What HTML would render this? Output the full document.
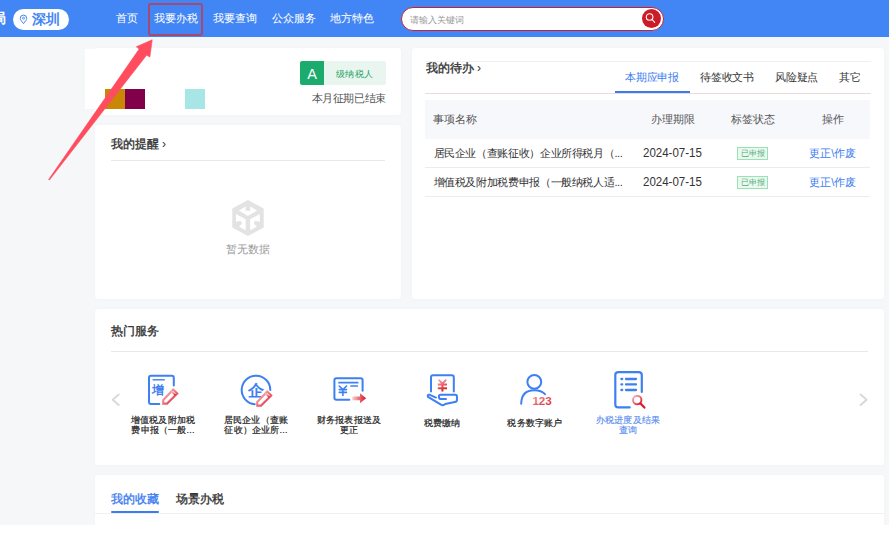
<!DOCTYPE html>
<html><head><meta charset="utf-8">
<style>
html,body{margin:0;padding:0;background:#fff;}
body{width:889px;height:536px;overflow:hidden;position:relative;font-family:"Liberation Sans",sans-serif;color:#333;}
.abs{position:absolute;}
#page{position:absolute;left:0;top:0;width:889px;height:525px;background:#f5f7f9;overflow:hidden;}
#hdr{position:absolute;left:0;top:0;width:889px;height:37px;background:#4285f4;}
.nav{position:absolute;top:10px;font-size:11px;line-height:16px;color:#fff;white-space:nowrap;-webkit-text-stroke:0.05px #fff;}
.card{position:absolute;background:#fff;border-radius:3px;box-shadow:0 0 3px rgba(0,0,0,0.03);}
.t{position:absolute;white-space:nowrap;}
.ttl{font-size:11.7px;line-height:14px;color:#333;-webkit-text-stroke:0.35px #333;}
.badge{width:29px;height:11px;border:1px solid #98e2b6;background:#eaf8f0;color:#4fae7c;font-size:8px;line-height:11px;text-align:center;}
.lbl{position:absolute;top:415px;width:100px;text-align:center;font-size:9px;letter-spacing:0.2px;line-height:10.4px;color:#222;-webkit-text-stroke:0.2px #222;white-space:nowrap;}
</style></head><body>
<div id="page">
  <div id="hdr">
    <div class="t" style="left:-8px;top:10px;font-size:14px;line-height:16px;color:#fff;font-weight:bold;">局</div>
    <div class="abs" style="left:13px;top:9px;width:56px;height:21px;border-radius:11px;background:#fff;"></div>
    <div class="t" style="left:32px;top:11px;font-size:14px;line-height:16px;color:#4285f4;font-weight:bold;">深圳</div>
    <div class="nav" style="left:115.7px;">首页</div>
    <div class="nav" style="left:153.6px;">我要办税</div>
    <div class="nav" style="left:213px;">我要查询</div>
    <div class="nav" style="left:271.6px;">公众服务</div>
    <div class="nav" style="left:330.3px;">地方特色</div>
    <div class="abs" style="left:148px;top:3px;width:51px;height:29px;border:2px solid #a64a72;border-radius:3px;"></div>
    <div class="abs" style="left:401px;top:7px;width:261px;height:22px;border:1px solid #c8202e;border-radius:12px;background:#fff;"></div>
    <div class="t" style="left:410px;top:13.5px;font-size:9.3px;line-height:12px;color:#999;">请输入关键词</div>
    <div class="abs" style="left:642px;top:9px;width:19px;height:19px;border-radius:50%;background:#cc1c27;"></div>
    <svg class="abs" style="left:19px;top:14px;" width="10" height="11" viewBox="0 0 10 11"><path d="M4.5 9.6L2 6.3Q1.3 5.3 1.3 4.3A3.2 3.2 0 0 1 7.7 4.3Q7.7 5.3 7 6.3Z" fill="none" stroke="#4285f4" stroke-width="1" stroke-linejoin="round"/><circle cx="4.5" cy="4.2" r="1" fill="none" stroke="#4285f4" stroke-width="0.9"/></svg>
    <svg class="abs" style="left:642px;top:9px;" width="19" height="19" viewBox="0 0 19 19"><circle cx="7.6" cy="8" r="3.3" fill="none" stroke="#fff" stroke-width="1.1"/><path d="M10 10.5L12.7 13.4" stroke="#fff" stroke-width="1.1" stroke-linecap="round"/></svg>
  </div>

  <!-- card 1 -->
  <div class="card" style="left:95px;top:48px;width:306px;height:67px;"></div>
  <div class="abs" style="left:85px;top:49px;width:12px;height:60px;background:#fff;"></div>
  <div class="abs" style="left:105px;top:89px;width:20px;height:20px;background:#c98705;"></div>
  <div class="abs" style="left:125px;top:89px;width:20px;height:20px;background:#82004a;"></div>
  <div class="abs" style="left:185px;top:89px;width:20px;height:20px;background:#a8e6e6;"></div>
  <div class="abs" style="left:300px;top:61px;width:24px;height:24px;background:#1aab6d;border-radius:2px 0 0 2px;"></div>
  <div class="t" style="left:304px;top:63.5px;width:16px;text-align:center;font-size:14.5px;line-height:20px;color:#fff;">A</div>
  <div class="abs" style="left:324px;top:61px;width:62px;height:24px;background:#e9f6ef;border-radius:0 2px 2px 0;"></div>
  <div class="t" style="left:336px;top:67.8px;font-size:9px;letter-spacing:0.3px;line-height:12px;color:#23a160;">级纳税人</div>
  <div class="t" style="left:311.5px;top:90.5px;font-size:11px;letter-spacing:-0.4px;line-height:14px;color:#555;">本月征期已结束</div>

  <!-- card 2 -->
  <div class="card" style="left:95px;top:125px;width:306px;height:174px;"></div>
  <div class="t ttl" style="left:111px;top:136.5px;">我的提醒</div><div class="t" style="left:162px;top:137px;font-size:12px;line-height:14px;color:#333;">›</div>
  <div class="abs" style="left:111px;top:160px;width:274px;height:1px;background:#e8e8e8;"></div>
  <svg class="abs" style="left:225px;top:193px;" width="47" height="50" viewBox="0 0 47 50">
    <path d="M22.9 7L38.7 15.4V34.5L22.9 43.1L7.3 34.5V15.4Z" fill="#e3e3e3"/>
    <path d="M13.8 17.5L20.6 13.6V17.8H25.2V13.6L32.2 17.5L22.9 22.9Z" fill="#fff"/>
    <path d="M11 21L20.7 26.3V37.3L14 33.7L17 30.5L15.6 27.7L11 28.8Z" fill="#fff"/>
    <path d="M34.8 21L25.1 26.3V37.3L31.8 33.7L28.8 30.5L30.2 27.7L34.8 28.8Z" fill="#fff"/>
  </svg>
  <div class="t" style="left:226px;top:242px;font-size:11px;line-height:14px;color:#999;">暂无数据</div>

  <!-- right card -->
  <div class="card" style="left:412px;top:48px;width:472px;height:251px;"></div>
  <div class="abs" style="left:425px;top:61px;width:446px;height:1px;background:#f0f0f0;"></div>
  <div class="t ttl" style="left:425.5px;top:61px;">我的待办</div><div class="t" style="left:477px;top:61px;font-size:12px;line-height:14px;color:#333;">›</div>
  <div class="abs" style="left:425px;top:93px;width:446px;height:1px;background:#eadcdc;"></div>
  <div class="t" style="left:625px;top:70px;font-size:11px;letter-spacing:-0.25px;line-height:14px;color:#3b7cf0;">本期应申报</div>
  <div class="abs" style="left:615px;top:91px;width:75px;height:2px;background:#3b7cf0;"></div>
  <div class="t" style="left:700px;top:70px;font-size:11px;letter-spacing:-0.25px;line-height:14px;color:#333;">待签收文书</div>
  <div class="t" style="left:775px;top:70px;font-size:11px;letter-spacing:-0.25px;line-height:14px;color:#333;">风险疑点</div>
  <div class="t" style="left:839px;top:70px;font-size:11px;letter-spacing:-0.25px;line-height:14px;color:#333;">其它</div>
  <div class="abs" style="left:425px;top:100px;width:445px;height:39px;background:#f7f8fc;"></div>
  <div class="t" style="left:433px;top:112px;font-size:11px;line-height:14px;color:#555;">事项名称</div>
  <div class="t" style="left:651px;top:112px;font-size:11px;line-height:14px;color:#555;">办理期限</div>
  <div class="t" style="left:731px;top:112px;font-size:11px;line-height:14px;color:#555;">标签状态</div>
  <div class="t" style="left:822px;top:112px;font-size:11px;line-height:14px;color:#555;">操作</div>
  <div class="abs" style="left:425px;top:167px;width:445px;height:1px;background:#ececec;"></div>
  <div class="abs" style="left:425px;top:196px;width:445px;height:1px;background:#ececec;"></div>
  <div class="t" style="left:433.5px;top:146px;font-size:11px;letter-spacing:-0.36px;line-height:14px;color:#333;">居民企业（查账征收）企业所得税月（...</div>
  <div class="t" style="left:433.5px;top:175px;font-size:11px;letter-spacing:-0.36px;line-height:14px;color:#333;">增值税及附加税费申报（一般纳税人适...</div>
  <div class="t" style="left:643px;top:145px;font-size:13.4px;line-height:16px;color:#333;transform:scaleX(0.86);transform-origin:0 0;">2024-07-15</div>
  <div class="t" style="left:643px;top:174px;font-size:13.4px;line-height:16px;color:#333;transform:scaleX(0.86);transform-origin:0 0;">2024-07-15</div>
  <div class="badge abs" style="left:737px;top:147px;">已申报</div>
  <div class="badge abs" style="left:737px;top:176px;">已申报</div>
  <div class="t" style="left:809.3px;top:146px;font-size:11px;line-height:14px;color:#3b7cf0;">更正\作废</div>
  <div class="t" style="left:809.3px;top:175px;font-size:11px;line-height:14px;color:#3b7cf0;">更正\作废</div>

  <!-- card 3 -->
  <div class="card" style="left:95px;top:309px;width:789px;height:156px;"></div>
  <div class="t ttl" style="left:111px;top:323.5px;">热门服务</div>
  <div class="abs" style="left:111px;top:351px;width:757px;height:1px;background:#e8e8e8;"></div>
  <div class="lbl" style="left:113px;">增值税及附加税<br>费申报（一般...</div>
  <div class="lbl" style="left:206px;">居民企业（查账<br>征收）企业所...</div>
  <div class="lbl" style="left:299px;">财务报表报送及<br>更正</div>
  <div class="lbl" style="left:392px;top:418px;">税费缴纳</div>
  <div class="lbl" style="left:485px;top:418px;">税务数字账户</div>
  <div class="lbl" style="left:578px;color:#5b8ef0;-webkit-text-stroke:0.15px #5b8ef0;">办税进度及结果<br>查询</div>


  <!-- icons -->
  <svg class="abs" style="left:140px;top:368px;" width="45" height="45" viewBox="0 0 45 45">
    <defs><linearGradient id="pg1" x1="0" y1="0" x2="1" y2="1"><stop offset="0.1" stop-color="#f8c4c9"/><stop offset="0.55" stop-color="#ec6672"/><stop offset="0.9" stop-color="#e0283a"/></linearGradient></defs>
    <path d="M33.8 17.6V9.7Q33.8 7.7 31.8 7.7H11Q9 7.7 9 9.7V34Q9 36 11 36H19.3" fill="none" stroke="#3d80f2" stroke-width="2" stroke-linecap="round"/>
    <path d="M12.6 11.8H24.8" stroke="#3d80f2" stroke-width="1.4"/>
    <text x="12.3" y="26.4" font-size="12" font-weight="bold" fill="#3d80f2" font-family="Liberation Sans">增</text>
    <g><path d="M23.2 35.6V31.9L33.2 21.6L37.2 25.5L27 35.6Z" fill="#fff" stroke="url(#pg1)" stroke-width="2.1" stroke-linejoin="miter"/><path d="M31.4 23.4L35.4 27.3" stroke="url(#pg1)" stroke-width="1.6"/></g>
  </svg>
  <svg class="abs" style="left:232px;top:368px;" width="45" height="45" viewBox="0 0 45 45">
    <defs><linearGradient id="pg2" x1="0" y1="0" x2="1" y2="1"><stop offset="0.1" stop-color="#f8c4c9"/><stop offset="0.55" stop-color="#ec6672"/><stop offset="0.9" stop-color="#e0283a"/></linearGradient></defs>
    <path d="M38.3 22A14.3 14.3 0 1 0 22.75 36.25" fill="none" stroke="#3d80f2" stroke-width="2" stroke-linecap="round"/>
    <text x="15.8" y="28.4" font-size="15.5" font-weight="bold" fill="#3d80f2" font-family="Liberation Sans">企</text>
    <g transform="translate(0,0)"><g transform="translate(2,2)"><path d="M23.2 35.6V31.9L33.2 21.6L37.2 25.5L27 35.6Z" fill="#fff" stroke="url(#pg2)" stroke-width="2.1" stroke-linejoin="miter"/><path d="M31.4 23.4L35.4 27.3" stroke="url(#pg2)" stroke-width="1.6"/></g></g>
  </svg>
  <svg class="abs" style="left:325px;top:368px;" width="45" height="45" viewBox="0 0 45 45">
    <defs><linearGradient id="ag3" x1="0" y1="0" x2="1" y2="0"><stop offset="0" stop-color="#fbd0d4"/><stop offset="1" stop-color="#d8101e"/></linearGradient></defs>
    <path d="M37.6 22.7V12.2Q37.6 10.2 35.6 10.2H11.4Q9.4 10.2 9.4 12.2V29.7Q9.4 31.7 11.4 31.7H24.3" fill="none" stroke="#3d80f2" stroke-width="2" stroke-linecap="round"/>
    <path d="M14 14.7H32.7M26 18H32.3" stroke="#3d80f2" stroke-width="1.7" stroke-linecap="round"/>
    <path d="M14.2 18L17.9 21.6L21.6 18M17.9 21.6V27.4M14.3 21.6H21.5M14.3 24.4H21.5" fill="none" stroke="#3d80f2" stroke-width="1.6" stroke-linecap="round"/>
    <path d="M27.3 28.5H35V25.2L41.1 30.3L35 35.3V32.3H27.3Z" fill="url(#ag3)"/>
  </svg>
  <svg class="abs" style="left:420px;top:368px;" width="45" height="45" viewBox="0 0 45 45">
    <defs><linearGradient id="yg4" x1="0" y1="0" x2="0.3" y2="1"><stop offset="0" stop-color="#f6b0b6"/><stop offset="1" stop-color="#dc1c2a"/></linearGradient></defs>
    <path d="M11 23.5V9.3Q11 7.3 13 7.3H31.8Q33.8 7.3 33.8 9.3V23.5" fill="none" stroke="#3d80f2" stroke-width="2" stroke-linecap="round"/>
    <path d="M18.6 11.6L22.4 15.6L26.2 11.6M22.4 15.6V23.5M17.8 16.6H27M17.8 20.2H27" fill="none" stroke="url(#yg4)" stroke-width="2"/>
    <path d="M15.95 29.55L9.24 26.7Q7.14 26.45 7.98 28.97L21.4 36.94Q22.67 37.6 25.19 36.1L34.84 34Q36.94 33.58 36.94 31.9V28.55Q36.94 26.87 35.26 26.87H20.57Q18.9 26.87 18.9 28.97Q18.9 31.07 21 31.07H26.03" fill="none" stroke="#3d80f2" stroke-width="2" stroke-linecap="round" stroke-linejoin="round"/>
  </svg>
  <svg class="abs" style="left:512px;top:368px;" width="45" height="45" viewBox="0 0 45 45">
    <defs><linearGradient id="ng5" x1="0" y1="0" x2="1" y2="1"><stop offset="0" stop-color="#f29aa2"/><stop offset="1" stop-color="#dc1c2a"/></linearGradient></defs>
    <circle cx="22.3" cy="13.9" r="6.9" fill="none" stroke="#3d80f2" stroke-width="2"/>
    <path d="M9.2 35.8Q9.4 22.3 22.3 22.3Q29.5 22.3 33 26.2" fill="none" stroke="#3d80f2" stroke-width="2" stroke-linecap="round"/>
    <text x="20.4" y="37.4" font-size="11.6" font-weight="bold" fill="url(#ng5)" font-family="Liberation Sans">123</text>
  </svg>
  <svg class="abs" style="left:605px;top:365px;" width="50" height="50" viewBox="0 0 50 50">
    <defs><linearGradient id="mg6" x1="0" y1="0" x2="1" y2="1"><stop offset="0" stop-color="#f6b8be"/><stop offset="1" stop-color="#dc1c2a"/></linearGradient></defs>
    <path d="M36.8 27V10.1Q36.8 7.1 33.8 7.1H13.3Q10.3 7.1 10.3 10.1V39.4Q10.3 42.4 13.3 42.4H24.7" fill="none" stroke="#3d80f2" stroke-width="2.2" stroke-linecap="round"/>
    <path d="M16.4 14H17.2M16.4 19.4H17.2M16.4 25H17.2M21 14H31M21 19.4H31M21 25H31" stroke="#3d80f2" stroke-width="2.3" stroke-linecap="round"/>
    <circle cx="32.2" cy="35" r="4.2" fill="none" stroke="url(#mg6)" stroke-width="2"/>
    <path d="M35.3 38.2L39.4 42.6" stroke="#dc1c2a" stroke-width="2.2" stroke-linecap="round"/>
  </svg>
  <svg class="abs" style="left:100px;top:380px;" width="30" height="40" viewBox="0 0 30 40"><path d="M18.7 14.6L12.7 19.8L18.7 25" fill="none" stroke="#d9d9d9" stroke-width="2" stroke-linecap="round" stroke-linejoin="round"/></svg>
  <svg class="abs" style="left:845px;top:380px;" width="30" height="40" viewBox="0 0 30 40"><path d="M15.7 14.6L21.6 19.8L15.7 25" fill="none" stroke="#d9d9d9" stroke-width="2" stroke-linecap="round" stroke-linejoin="round"/></svg>

  <!-- card 4 -->
  <div class="card" style="left:95px;top:475px;width:789px;height:60px;"></div>
  <div class="t ttl" style="left:111px;top:492px;color:#3b7cf0;-webkit-text-stroke-color:#3b7cf0;">我的收藏</div>
  <div class="abs" style="left:111px;top:511px;width:48px;height:2px;border-radius:1px;background:#3b7cf0;"></div>
  <div class="t ttl" style="left:175.5px;top:492px;">场景办税</div>
  <div class="abs" style="left:95px;top:513px;width:789px;height:1px;background:#f0f0f0;"></div>

  <svg class="abs" style="left:0;top:0;" width="200" height="200" viewBox="0 0 200 200"><path d="M48.6 179.6L139.1 49.1L136.3 46.8L152.2 39.8L149.9 57L146.6 55.2L49.4 180Z" fill="#ff4d5f" stroke="#ff4d5f" stroke-width="0.6" stroke-linejoin="round"/></svg>
</div>
</body></html>
